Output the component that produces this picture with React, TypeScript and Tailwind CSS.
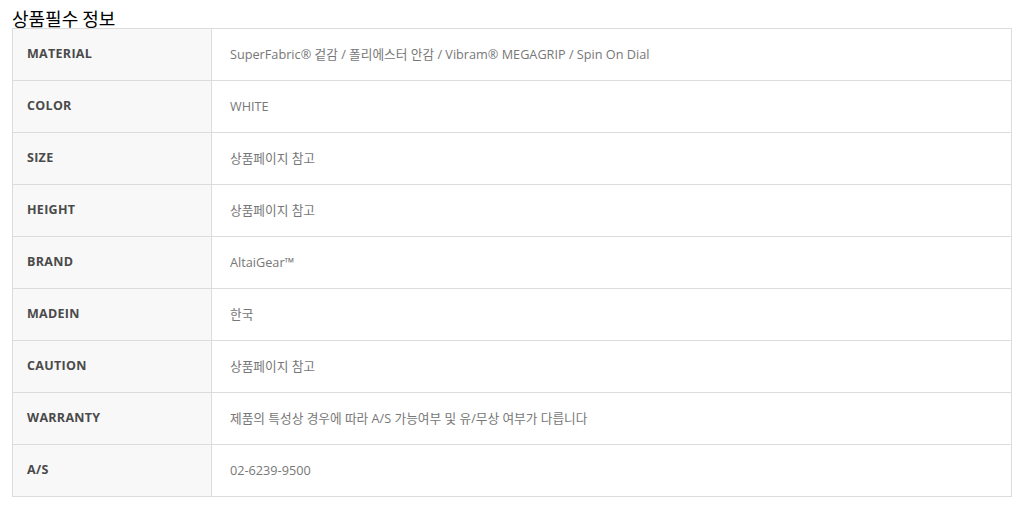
import React from "react";

const rows: [string, string][] = [
  ["MATERIAL", "SuperFabric® 겉감 / 폴리에스터 안감 / Vibram® MEGAGRIP / Spin On Dial"],
  ["COLOR", "WHITE"],
  ["SIZE", "상품페이지 참고"],
  ["HEIGHT", "상품페이지 참고"],
  ["BRAND", "AltaiGear™"],
  ["MADEIN", "한국"],
  ["CAUTION", "상품페이지 참고"],
  ["WARRANTY", "제품의 특성상 경우에 따라 A/S 가능여부 및 유/무상 여부가 다릅니다"],
  ["A/S", "02-6239-9500"],
];

export default function App() {
  return (
    <div className="bg-white w-[1024px] h-[520px] px-[12px] font-['Open_Sans','Noto_Sans_CJK_KR',sans-serif]">
      <div className="pt-[9px] text-[18px] leading-[19px] text-black font-['Noto_Sans_CJK_KR',sans-serif]">상품필수 정보</div>
      <div className="w-[1000px] border border-[#dcdcdc]">
        {rows.map(([k, v], i) => (
          <div
            key={k}
            className={`flex h-[51px] box-content ${i > 0 ? "border-t border-[#dcdcdc]" : ""}`}
          >
            <div className="w-[199px] shrink-0 bg-[#f8f8f8] border-r border-[#dcdcdc] flex items-center pl-[14px] text-[12.5px] font-bold text-[#4a4a4a] tracking-[0.3px]">
              {k}
            </div>
            <div className="flex items-center pl-[18px] text-[12.7px] text-[#777]">
              {v}
            </div>
          </div>
        ))}
      </div>
    </div>
  );
}
